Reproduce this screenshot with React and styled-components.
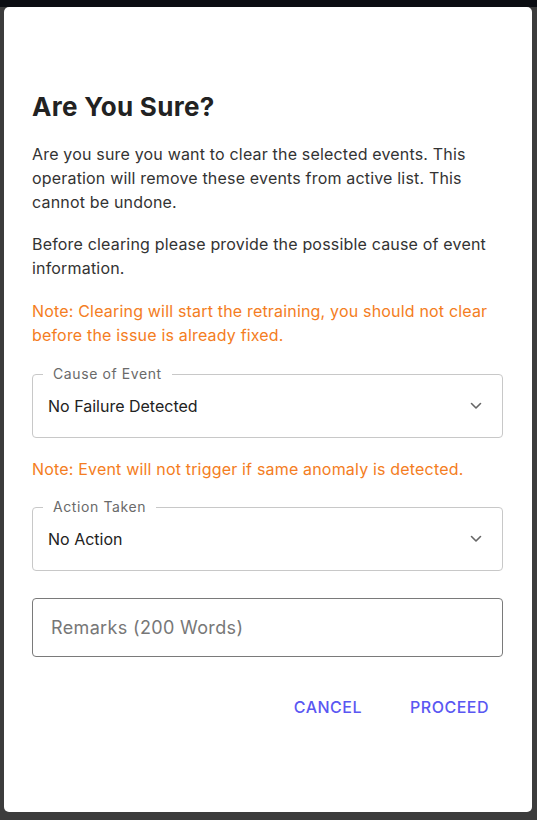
import React from "react";
import styled, { createGlobalStyle } from "styled-components";

const GlobalStyle = createGlobalStyle`
  * { box-sizing: border-box; }
  body {
    margin: 0;
    background: #3c3c3c;
    font-family: Inter, "Noto Sans", sans-serif;
  }
`;

const Chevron = () => (
  <svg width="12" height="8" viewBox="0 0 12 8" fill="none">
    <path d="M1.5 1.5L6 6l4.5-4.5" stroke="#666" strokeWidth="1.6" strokeLinecap="round" strokeLinejoin="round" />
  </svg>
);

const App = () => {
  return (
    <Page>
      <GlobalStyle />
      <TopBar />
      <Dialog>
        <Title>Are You Sure?</Title>
        <Text>
          Are you sure you want to clear the selected events. This operation will remove these events from active
          list. This cannot be undone.
        </Text>
        <Text>Before clearing please provide the possible cause of event information.</Text>
        <Text warn>
          Note: Clearing will start the retraining, you should not clear before the issue is already fixed.
        </Text>

        <SelectBox>
          <Label>Cause of Event</Label>
          <Value>No Failure Detected</Value>
          <Chevron />
        </SelectBox>

        <Text warn>Note: Event will not trigger if same anomaly is detected.</Text>

        <SelectBox>
          <Label>Action Taken</Label>
          <Value>No Action</Value>
          <Chevron />
        </SelectBox>

        <Remarks placeholder="Remarks (200 Words)" />

        <Actions>
          <Button>Cancel</Button>
          <Button>Proceed</Button>
        </Actions>
      </Dialog>
    </Page>
  );
};

const Page = styled.div`
  min-height: 100vh;
  display: flex;
  flex-direction: column;
`;

const TopBar = styled.div`
  height: 7px;
  background: #0b0d12;
`;

const Dialog = styled.div`
  flex: 1;
  margin: 0 5px 8px 4px;
  background: #fff;
  border-radius: 5px;
  padding: 84px 29px 0 28px;
  display: flex;
  flex-direction: column;
`;

const Title = styled.h2`
  margin: 0 0 20px;
  font-size: 26px;
  line-height: 32px;
  font-weight: 700;
  letter-spacing: 0.3px;
  color: #222;
`;

const Text = styled.p`
  margin: 0 0 19px;
  font-size: 16px;
  line-height: 23.8px;
  letter-spacing: 0.18px;
  color: ${(p) => (p.warn ? "#f47d22" : "#333")};
`;

const SelectBox = styled.div`
  position: relative;
  height: 64px;
  margin-top: 7px;
  margin-bottom: 20px;
  border: 1px solid #c8c8c8;
  border-radius: 4px;
  padding: 0 20px 0 15px;
  display: flex;
  align-items: center;
  justify-content: space-between;
`;

const Label = styled.span`
  position: absolute;
  top: -10px;
  left: 10px;
  padding: 0 10px;
  background: #fff;
  font-size: 14px;
  line-height: 18px;
  letter-spacing: 0.6px;
  color: #6a6a6a;
`;

const Value = styled.span`
  font-size: 16px;
  color: #222;
`;

const Remarks = styled.input`
  height: 59px;
  margin-top: 7px;
  border: 1px solid #7a7a7a;
  border-radius: 4px;
  padding: 0 18px;
  font-family: inherit;
  font-size: 18px;
  letter-spacing: 0.35px;
  color: #222;
  outline: none;

  &::placeholder {
    color: #777;
  }
`;

const Actions = styled.div`
  display: flex;
  justify-content: flex-end;
  gap: 20px;
  margin-top: 32px;
`;

const Button = styled.button`
  height: 36px;
  padding: 0 14px;
  border: none;
  background: none;
  font-family: inherit;
  font-size: 16px;
  font-weight: 500;
  letter-spacing: 0.5px;
  text-transform: uppercase;
  color: #5a57f2;
  cursor: pointer;
`;

export default App;
